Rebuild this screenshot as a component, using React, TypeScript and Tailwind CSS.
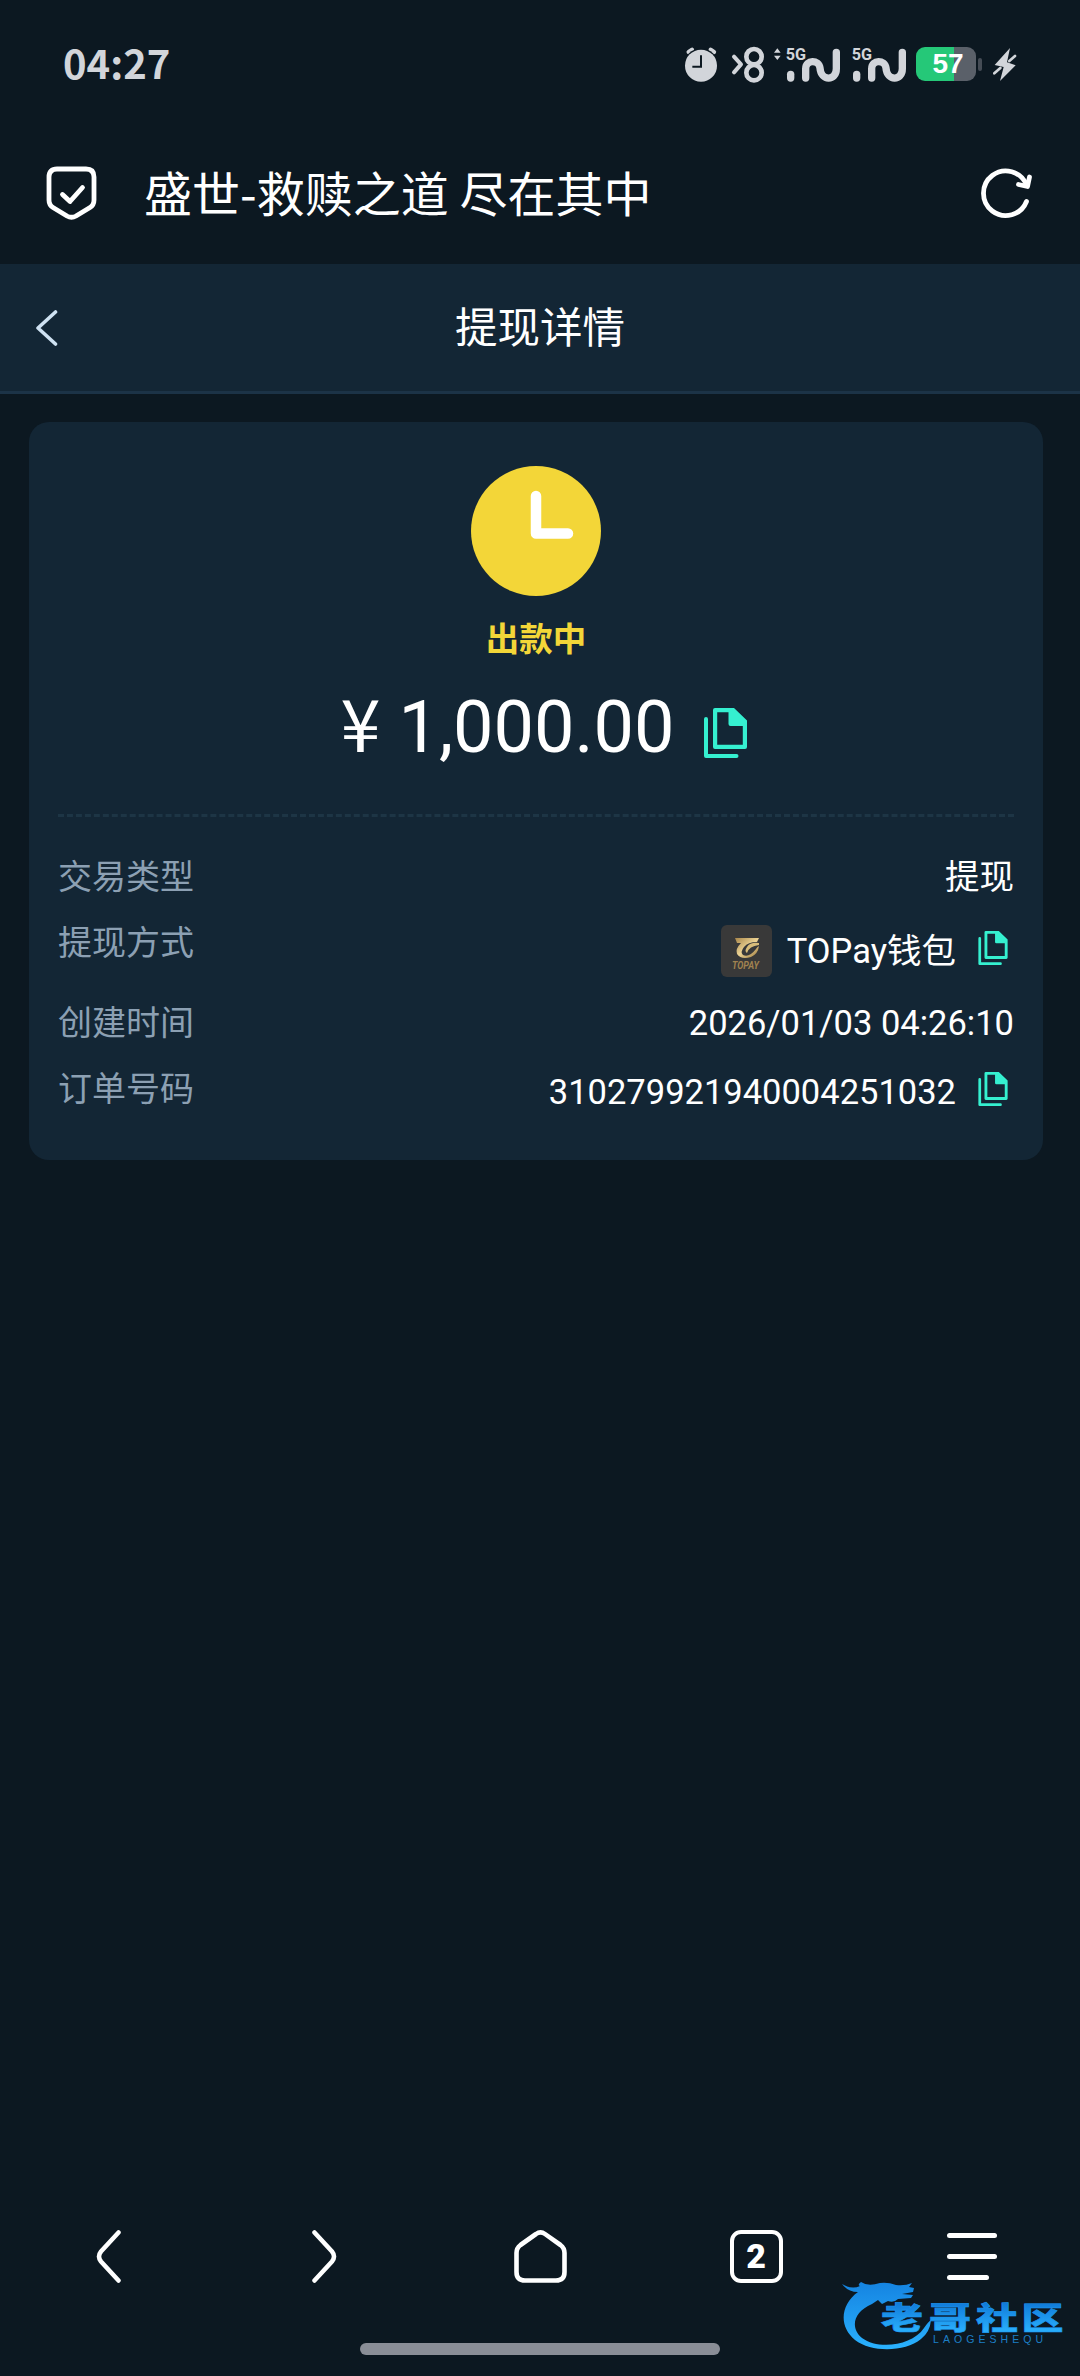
import { ReactNode } from "react";

interface RowProps {
    label: string;
    className: string;
    children: ReactNode;
}

const CopyIcon = ({ className }: { className: string }) => (
    <svg className={className} viewBox="0 0 43 50" fill="none">
        <path d="M2 11V48H32.5" stroke="#35f0d0" strokeWidth="4" strokeLinecap="round" strokeLinejoin="round" />
        <path
            fillRule="evenodd"
            clipRule="evenodd"
            d="M11 0H30L43 12.5V39Q43 41 41 41H11Q9 41 9 39V2Q9 0 11 0ZM13.2 4.2V36.8H38.8V18H26.5Q24.5 18 24.5 16V4.2Z"
            fill="#35f0d0"
        />
    </svg>
);

const Signal = ({ x }: { x: number }) => (
    <g transform={`translate(${x} 0)`}>
        <text x="1" y="87" fontSize="47" fontWeight="700" fill="#d2d5da" textLength="61" lengthAdjust="spacingAndGlyphs" className="font-['Roboto','Noto_Sans',sans-serif]">5G</text>
        <path d="M16 131V142" stroke="#d2d5da" strokeWidth="22" strokeLinecap="round" />
        <path d="M61 142V114C61 86 101 86 104 112C107 152 153 152 153 114V65" stroke="#d2d5da" strokeWidth="22" strokeLinecap="round" />
    </g>
);

const StatusBar = () => (
    <div className="flex h-[128px] items-center justify-between pr-[63px] pl-[63px]">
        <span className="pb-1 text-[40px] leading-none font-bold text-[#d2d5da]">04:27</span>
        <div className="flex items-center">
            <svg className="h-[37px] w-[35px]" viewBox="72 46 105 111" fill="none">
                <path d="M86 64L96 57M152 57L162 64" stroke="#d2d5da" strokeWidth="13" strokeLinecap="round" />
                <circle cx="123" cy="105" r="52" fill="#0c1821" />
                <circle cx="123" cy="105" r="48" fill="#d2d5da" />
                <path d="M123 74V108H97" stroke="#0c1821" strokeWidth="6" />
            </svg>
            <svg className="ml-3 h-[37px] w-[34px]" viewBox="213 46 102 111" fill="none">
                <path d="M222 78L243 101L222 125" stroke="#d2d5da" strokeWidth="12" strokeLinecap="round" strokeLinejoin="round" />
                <circle cx="282" cy="78" r="23" stroke="#d2d5da" strokeWidth="14" />
                <circle cx="282" cy="126" r="23" stroke="#d2d5da" strokeWidth="14" />
            </svg>
            <svg className="ml-2 h-[37px] w-[68px]" viewBox="339 46 204 111" fill="none">
                <path d="M352 53L362 66H342ZM352 88L362 75H342Z" fill="#d2d5da" />
                <Signal x={376} />
            </svg>
            <svg className="ml-2.5 h-[37px] w-[56px]" viewBox="573 46 168 111" fill="none">
                <Signal x={574} />
            </svg>
            <div className="ml-[9px] flex h-[34px] w-[60px] items-center justify-center rounded-[9px] bg-linear-to-r from-[#25c878] from-63% to-[#5a6069] to-63%">
                <span className="pl-1 font-['Liberation_Sans',sans-serif] text-[28px] leading-none font-bold text-white">57</span>
            </div>
            <div className="ml-0.5 h-[13px] w-1 rounded-full bg-[#454c55]" />
            <svg className="ml-[11px] h-[37px] w-6" viewBox="999 46 72 111" fill="none">
                <path d="M1050 52L1004 103L1031 109L1020 151L1067 104L1041 95Z" fill="#d2d5da" />
                <path d="M1048 91L1065 76M1003 128L1021 112" stroke="#d2d5da" strokeWidth="8" strokeLinecap="round" />
            </svg>
        </div>
    </div>
);

const AddressBar = () => (
    <div className="flex h-[136px] items-center pr-[47px] pb-1.5 pl-[46px]">
        <svg className="h-[54px] w-[51px]" viewBox="0 0 51 54" fill="none" stroke="white" strokeWidth="4.8" strokeLinecap="round" strokeLinejoin="round">
            <path d="M11 3H40Q48 3 48 11V34Q48 39 44 41.500L30 50Q25.500 52.500 21 50L7 41.500Q3 39 3 34V11Q3 3 11 3Z" />
            <path d="M16.500 28.500L24 35.500L36.500 21.500" />
        </svg>
        <h1 className="ml-[47px] pb-[5px] text-[48px] leading-none whitespace-nowrap text-white">盛世-救赎之道 尽在其中</h1>
        <svg className="ml-auto h-[52px] w-[53px]" viewBox="980 166 53 52" fill="none" stroke="white" strokeWidth="4.8" strokeLinecap="round" strokeLinejoin="round">
            <path d="M1026.500 200.500A22.300 22.300 0 1 1 1026.500 184" />
            <path d="M1018.500 183.500L1027.500 185.500L1029.500 176" />
        </svg>
    </div>
);

const PageHeader = () => (
    <header className="grid h-[130px] grid-cols-[1fr_auto_1fr] items-center border-b-[3px] border-[#1c3347] bg-[#132635]">
        <svg className="ml-[35px] h-9 w-6" viewBox="0 0 24 36" fill="none">
            <path d="M20.500 2L3 18L20.500 34" stroke="#cfe2f2" strokeWidth="3.600" strokeLinecap="round" strokeLinejoin="round" />
        </svg>
        <h2 className="pt-[3px] text-[42.500px] leading-none text-white">提现详情</h2>
        <span />
    </header>
);

const TopayLogo = () => (
    <svg className="h-[52px] w-[51px] rounded-md bg-[#393939]" viewBox="0 0 51 52">
        <defs>
            <linearGradient id="gold" x1="0" y1="0" x2="1" y2="1">
                <stop offset="0" stopColor="#a8864a" />
                <stop offset="0.5" stopColor="#ecd394" />
                <stop offset="1" stopColor="#9a7638" />
            </linearGradient>
        </defs>
        <path d="M14 13H38L36 17Q27 17 23 22Q19 27 22 30Q28 33 35 24Q36 22 38 21Q37 29 30 32Q20 35 16 29Q14 24 20 18H16Z" fill="url(#gold)" />
        <path d="M38 18Q29 17 26 22Q23 26 26 28Q28 21 38 20Z" fill="#d9bd7a" />
        <text x="11" y="44" fontSize="10.500" fontWeight="700" fontStyle="italic" fill="#a08250" textLength="27" lengthAdjust="spacingAndGlyphs" className="font-['Roboto',sans-serif]">TOPAY</text>
    </svg>
);

const Row = ({ label, className, children }: RowProps) => (
    <div className={`flex items-start justify-between ${className}`}>
        <span className="text-[34px] leading-[50px] text-[#8ca0b3]">{label}</span>
        <div className="flex items-center text-[34.500px] leading-[50px] text-white">{children}</div>
    </div>
);

const DetailCard = () => (
    <section className="mt-7 ml-[29px] flex h-[738px] w-[1014px] flex-col rounded-[20px] bg-[#132635] px-[29px] pt-11">
        <div className="flex flex-col items-center">
            <svg className="h-[130px] w-[130px]" viewBox="0 0 130 130">
                <circle cx="65" cy="65" r="65" fill="#f3d638" />
                <path d="M65 30V67.500H97" fill="none" stroke="white" strokeWidth="10.500" strokeLinecap="round" strokeLinejoin="round" />
            </svg>
            <p className="mt-[26px] text-[33.500px] leading-[36px] font-bold text-[#f3d638]">出款中</p>
        </div>
        <div className="mt-[27px] flex h-[85px] items-center justify-center pl-4">
            <span className="text-[72px] leading-[85px] text-white">
                <span className="font-['Noto_Sans_CJK_SC',sans-serif] leading-none">¥</span> 1,000.00
            </span>
            <CopyIcon className="mt-2.5 ml-[30px] h-[50px] w-[43px]" />
        </div>
        <div className="mt-11 border-t-[3px] border-dashed border-[#1d3545]" />
        <Row label="交易类型" className="mt-[35px] h-[66px]">
            <span>提现</span>
        </Row>
        <Row label="提现方式" className="h-20">
            <div className="flex items-center pt-[7px]">
                <TopayLogo />
                <span className="ml-[15px]">TOPay钱包</span>
                <CopyIcon className="mr-1.5 mb-[7px] ml-[22px] h-[34px] w-[30px]" />
            </div>
        </Row>
        <Row label="创建时间" className="h-[66px]">
            <span>2026/01/03 04:26:10</span>
        </Row>
        <Row label="订单号码" className="">
            <span className="pt-[3px]">310279921940004251032</span>
            <CopyIcon className="mr-1.5 mb-1 ml-[22px] h-[34px] w-[30px]" />
        </Row>
    </section>
);

const BottomNav = () => (
    <nav className="mt-auto grid h-[53px] grid-cols-5 place-items-center">
        <svg className="h-[53px] w-[25px]" viewBox="0 0 25 53" fill="none" stroke="white" strokeWidth="4.500" strokeLinecap="round">
            <path d="M22.500 2.500L5 21.500Q1 26.500 5 31.500L22.500 50.500" />
        </svg>
        <svg className="h-[53px] w-[25px]" viewBox="0 0 25 53" fill="none" stroke="white" strokeWidth="4.500" strokeLinecap="round">
            <path d="M2.500 2.500L20 21.500Q24 26.500 20 31.500L2.500 50.500" />
        </svg>
        <svg className="h-[53px] w-[53px]" viewBox="0 0 53 53" fill="none" stroke="white" strokeWidth="4.600" strokeLinejoin="round">
            <path d="M22 4Q26.500 0.800 31 4L46.500 15Q50.500 18 50.500 23V42Q50.500 50.500 42 50.500H11Q2.500 50.500 2.500 42V23Q2.500 18 6.500 15Z" />
        </svg>
        <div className="flex h-[53px] w-[53px] items-center justify-center rounded-[11px] border-4 border-white pb-0.5 text-[34px] leading-none font-black text-white">2</div>
        <div className="flex w-[50px] flex-col gap-4">
            <span className="h-[5px] rounded-full bg-white" />
            <span className="h-[5px] rounded-full bg-white" />
            <span className="h-[5px] w-[42px] rounded-full bg-white" />
        </div>
    </nav>
);

// drawn over the bottom right corner of the screen
const Watermark = () => (
    <svg className="absolute right-[10px] bottom-4 h-[90px] w-[230px]" viewBox="840 2270 230 90">
        <defs>
            <linearGradient id="dragon" gradientUnits="userSpaceOnUse" x1="0" y1="2280" x2="0" y2="2350">
                <stop offset="0" stopColor="#1482e0" />
                <stop offset="1" stopColor="#2ab2ff" />
            </linearGradient>
            <linearGradient id="letters" x1="0" y1="0" x2="0" y2="1">
                <stop offset="0.2" stopColor="#0f78d8" />
                <stop offset="0.8" stopColor="#28acfa" />
            </linearGradient>
        </defs>
        <path d="M842 2284Q852 2290 860 2286Q857 2285 861 2282Q868 2287 880 2283Q888 2282 896 2285Q905 2286 912 2283L909 2287L914 2288L913 2292L902 2294L913 2295L911 2298L898 2299Q894 2303 888 2301L882 2304L878 2300L872 2304C853 2312 850 2328 862 2338C878 2350 912 2346 924 2328Q928 2322 931 2320Q930 2332 921 2339C905 2352 872 2353 855 2340C838 2326 841 2304 858 2292Q848 2292 842 2284Z" fill="url(#dragon)" />
        <text transform="translate(0 2329) scale(1 0.74)" fontSize="42" fontWeight="900" fill="url(#letters)" stroke="#1d96ee" strokeWidth="0.800" className="font-['Noto_Sans_CJK_SC',sans-serif]">
            <tspan x="881">老</tspan>
            <tspan x="929">哥</tspan>
            <tspan x="976">社</tspan>
            <tspan x="1021.500">区</tspan>
        </text>
        <text x="933" y="2343" fontSize="10.500" fill="#1c7fc6" textLength="110" className="font-['Liberation_Sans',sans-serif]">LAOGESHEQU</text>
    </svg>
);

const App = () => {
    return (
        <div className="relative flex h-[2376px] w-[1080px] flex-col overflow-hidden bg-[#0c1821] font-['Roboto','Noto_Sans_CJK_SC',sans-serif]">
            <div className="font-['Noto_Sans_CJK_SC',sans-serif]">
                <StatusBar />
                <AddressBar />
            </div>
            <PageHeader />
            <DetailCard />
            <BottomNav />
            <div className="mx-auto mt-[60px] mb-[21px] h-3 w-[360px] shrink-0 rounded-full bg-[#8a8e97]" />
            <Watermark />
        </div>
    );
};

export default App;
